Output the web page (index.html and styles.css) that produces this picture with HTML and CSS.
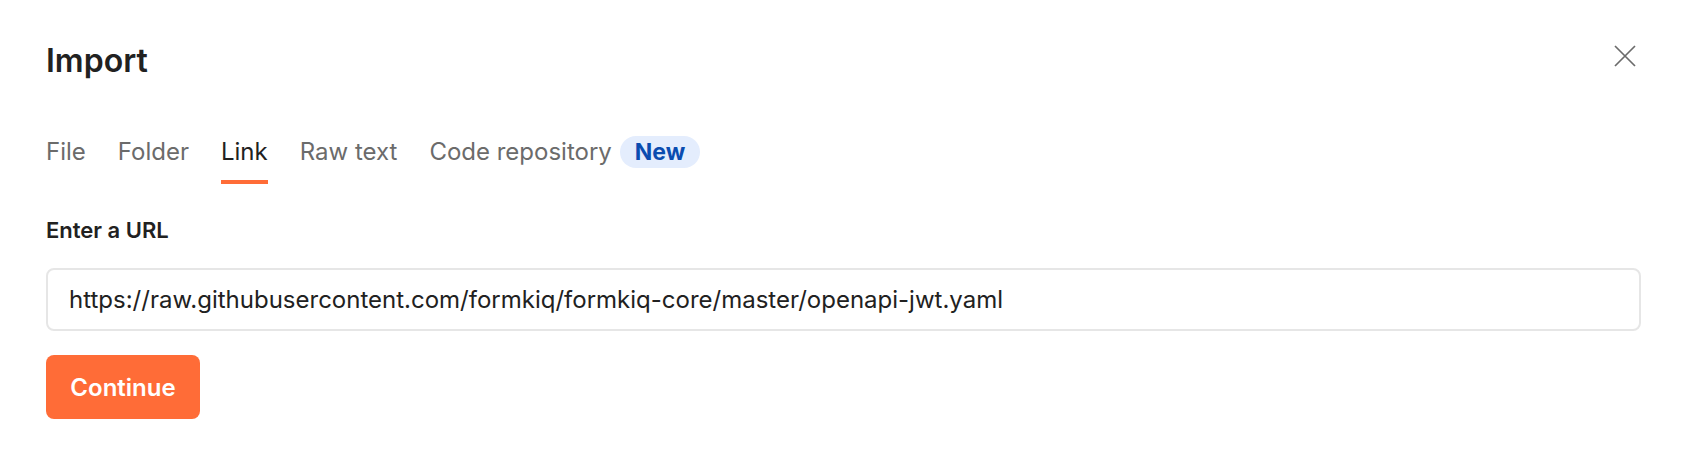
FILE: index.html
```html
<!DOCTYPE html>
<html lang="en">
<head>
<meta charset="utf-8">
<title>Import</title>
<link rel="stylesheet" href="styles.css">
</head>
<body>
<div class="modal">
  <div class="header">
    <h1 class="title">Import</h1>
    <button class="close" aria-label="Close">
      <svg width="22" height="22" viewBox="0 0 22 22"><path d="M1 1L21 21M21 1L1 21" stroke="#6b6b6b" stroke-width="1.7" fill="none"/></svg>
    </button>
  </div>
  <div class="tabs">
    <div class="tab">File</div>
    <div class="tab">Folder</div>
    <div class="tab active">Link</div>
    <div class="tab">Raw text</div>
    <div class="tab">Code repository<span class="badge">New</span></div>
  </div>
  <label class="label">Enter a URL</label>
  <div class="input">https://raw.githubusercontent.com/formkiq/formkiq-core/master/openapi-jwt.yaml</div>
  <button class="btn">Continue</button>
</div>
</body>
</html>
```
FILE: styles.css
```css
* { box-sizing: border-box; }
html, body { margin: 0; padding: 0; background: #fff; }
body { font-family: Inter, "Noto Sans", sans-serif; color: #212121; }
.modal { padding: 0 43px 0 46px; display: flex; flex-direction: column; align-items: flex-start; }
.header { width: 100%; display: flex; justify-content: space-between; align-items: flex-start; padding-top: 43px; }
.title { margin: 0; font-size: 32px; line-height: 36px; font-weight: 600; color: #212121; }
.close { width: 32px; height: 32px; margin-top: -3px; border: 0; background: none; padding: 0; display: flex; align-items: center; justify-content: center; }
.tabs { display: flex; gap: 32px; margin-top: 57px; }
.tab { font-size: 24px; line-height: 32px; color: #6b6b6b; padding-bottom: 12px; border-bottom: 4px solid transparent; display: flex; align-items: center; white-space: nowrap; }
.tab.active { color: #212121; border-bottom-color: #ff6c37; }
.badge { display: inline-block; height: 32px; line-height: 32px; padding: 0 15px; border-radius: 16px; background: #e4edfd; color: #0a4cb0; font-weight: 700; font-size: 23px; margin-left: 8px; }
.label { display: block; margin-top: 33px; font-size: 22px; line-height: 26px; font-weight: 600; color: #212121; }
.input { width: 100%; height: 63px; margin-top: 25px; border: 2px solid #e6e6e6; border-radius: 8px; padding: 0 21px; display: flex; align-items: center; font-size: 24px; color: #212121; }
.btn { margin-top: 24px; width: 154px; height: 64px; border: 0; border-radius: 8px; background: #ff6c37; color: #fff; font-family: Inter, "Noto Sans", sans-serif; font-size: 24px; font-weight: 600; }
```
